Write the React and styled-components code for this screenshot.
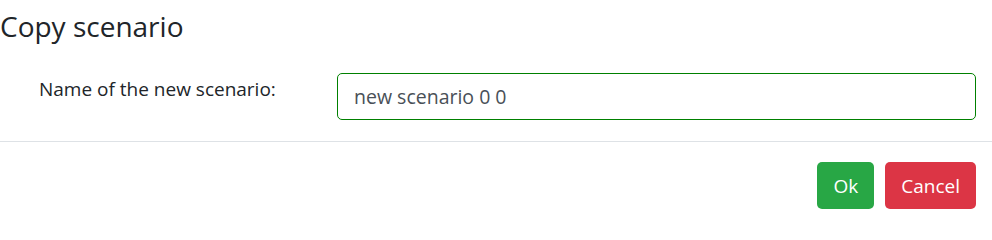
import React, { useState } from "react";
import styled, { createGlobalStyle } from "styled-components";

const GlobalStyle = createGlobalStyle`
  html, body {
    margin: 0;
    padding: 0;
    background: #fff;
  }
  body {
    font-family: "Open Sans", "Noto Sans", sans-serif;
    color: #212529;
  }
`;

const Modal = styled.div`
  width: 992px;
  background: #fff;
`;

const Header = styled.div`
  display: flex;
  align-items: center;
  height: 52px;
  padding: 0 16px 0 0;
`;

const Title = styled.h5`
  margin: 0;
  font-size: 28px;
  font-weight: 400;
  line-height: 36px;
  color: #212529;
`;

const Body = styled.div`
  padding: 21px 16px 21px 39px;
`;

const FormRow = styled.div`
  display: flex;
  align-items: flex-start;
`;

const Label = styled.label`
  width: 298px;
  flex-shrink: 0;
  padding-top: 1px;
  font-size: 19px;
  line-height: 30px;
  color: #212529;
`;

const InputFrame = styled.div`
  flex: 1;
  display: flex;
  height: 47px;
  box-sizing: border-box;
  border: 1px solid #008000;
  border-radius: 5px;
  background: #fff;
  overflow: hidden;
`;

const TextInput = styled.input`
  flex: 1;
  min-width: 0;
  padding: 0 16px;
  border: 0;
  background: transparent;
  font-family: inherit;
  font-size: 19.5px;
  color: #495057;
  outline: none;
`;

const Footer = styled.div`
  display: flex;
  justify-content: flex-end;
  gap: 11px;
  padding: 20px 16px 19px;
  border-top: 1px solid #dee2e6;
`;

const Button = styled.button`
  height: 47px;
  padding: 0 16px;
  border: none;
  border-radius: 5px;
  font-family: inherit;
  font-size: 19px;
  color: #fff;
  background: ${(p) => (p.$variant === "danger" ? "#dc3545" : "#28a745")};
  cursor: pointer;
`;

export default function App() {
  const [name, setName] = useState("new scenario 0 0");

  return (
    <>
      <GlobalStyle />
      <Modal>
        <Header>
          <Title>Copy scenario</Title>
        </Header>
        <Body>
          <FormRow>
            <Label htmlFor="scenario-name">Name of the new scenario:</Label>
            <InputFrame>
              <TextInput
                id="scenario-name"
                value={name}
                onChange={(e) => setName(e.target.value)}
              />
            </InputFrame>
          </FormRow>
        </Body>
        <Footer>
          <Button $variant="success">Ok</Button>
          <Button $variant="danger">Cancel</Button>
        </Footer>
      </Modal>
    </>
  );
}
